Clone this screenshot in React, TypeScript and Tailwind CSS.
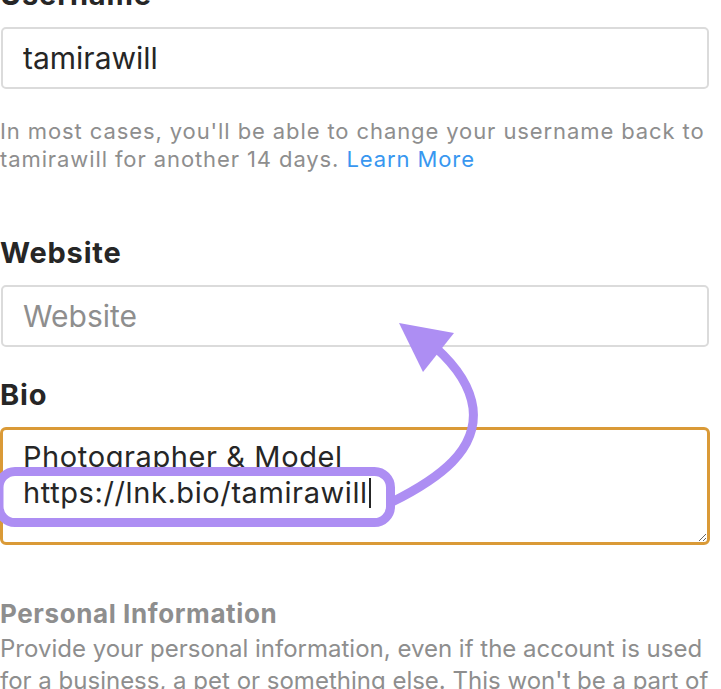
export default function App() {
  return (
    <div className="relative h-[689px] w-[721px] overflow-hidden bg-white font-['Inter',sans-serif] text-[#262626]">
      <div className="flex flex-col">
        <label className="mt-[-22px] text-[29px] leading-[34px] font-bold tracking-[0.8px]">Username</label>
        <input
          readOnly
          defaultValue="tamirawill"
          className="mt-[15px] ml-px h-[62px] w-[708px] rounded-[5px] border-2 border-[#dbdbdb] bg-white px-5 text-[30px] text-[#262626] outline-none"
        />
        <p className="mt-[28px] text-[22px] leading-[28px] tracking-[0.9px] text-[#8e8e8e]">
          In most cases, you'll be able to change your username back to tamirawill for another 14 days.{" "}
          <a className="text-[#3897f0]">Learn More</a>
        </p>

        <label className="mt-[63px] text-[29px] leading-[34px] font-bold tracking-[0.8px]">Website</label>
        <input
          readOnly
          placeholder="Website"
          className="mt-[15px] ml-px h-[62px] w-[708px] rounded-[5px] border-2 border-[#dbdbdb] bg-white px-5 text-[30px] outline-none placeholder:text-[#8e8e8e]"
        />

        <label className="mt-[31px] text-[29px] leading-[34px] font-bold tracking-[0.8px]">Bio</label>
        <div className="mt-[15px] h-[118px] w-[710px] resize overflow-auto rounded-[6px] border-[3px] border-[#da9a37] px-5 pt-[9px] text-[29px] leading-[36px] tracking-[0.6px]">
          <div>Photographer &amp; Model</div>
          <div className="flex items-center">
            https://lnk.bio/tamirawill
            <span className="ml-px h-[30px] w-[2px] bg-[#262626]" />
          </div>
        </div>

        <h3 className="mt-[54px] text-[26px] leading-[30px] font-bold tracking-[0.6px] text-[#8e8e8e]">Personal Information</h3>
        <p className="mt-[4px] text-[24px] leading-[32px] text-[#8e8e8e]">
          Provide your personal information, even if the account is used for a business, a pet or something else. This won't be a part of your public profile.
        </p>
      </div>

      <svg className="pointer-events-none absolute top-0 left-0" width="721" height="689" viewBox="0 0 721 689">
        <rect x="-1" y="471.5" width="391.5" height="51" rx="16" fill="none" stroke="#ad8ef3" strokeWidth="9" />
        <path d="M 392 502 C 440 478, 478 450, 473 408 C 470 386, 456 366, 436 348" fill="none" stroke="#ad8ef3" strokeWidth="9" />
        <polygon points="399,323 454,333 423,372" fill="#ad8ef3" />
      </svg>
    </div>
  )
}
